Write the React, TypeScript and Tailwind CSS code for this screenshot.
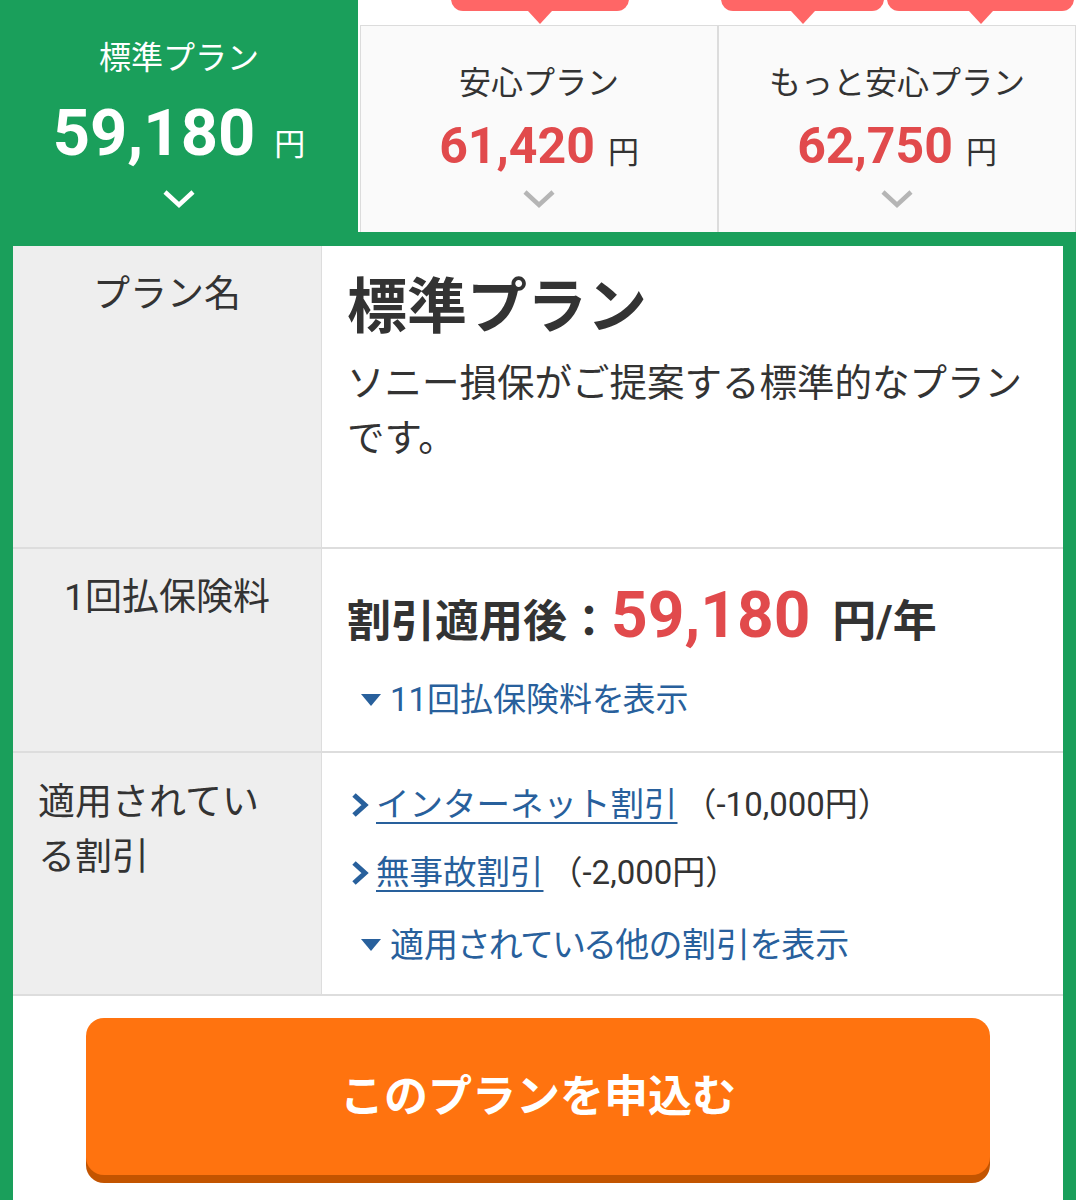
import React from "react";

const ChevronDown = ({ color, className }: { color: string; className?: string }) => (
  <svg width="34" height="20" viewBox="0 0 34 20" className={className}>
    <polyline points="3,3 17,16 31,3" fill="none" stroke={color} strokeWidth="4.5" strokeLinecap="butt" />
  </svg>
);

const ChevronRight = () => (
  <svg width="20" height="28" viewBox="0 0 20 28" className="shrink-0">
    <polyline points="4,4 15,14 4,24" fill="none" stroke="#28609c" strokeWidth="5" />
  </svg>
);

const Triangle = () => (
  <svg width="22" height="14" viewBox="0 0 22 14" className="shrink-0">
    <polygon points="1,1 21,1 11,13" fill="#28609c" />
  </svg>
);

const Bubble = ({ className }: { className: string }) => (
  <div className={`absolute flex flex-col items-center ${className}`}>
    <div className="h-[40px] w-full rounded-b-[12px] bg-[#ff6666]" />
    <div className="h-0 w-0 border-x-[12px] border-t-[13px] border-x-transparent border-t-[#ff6666]" />
  </div>
);

const plans = [
  { name: "安心プラン", price: "61,420" },
  { name: "もっと安心プラン", price: "62,750" },
];

export default function App() {
  return (
    <div className="min-h-[1220px] overflow-hidden bg-white font-['Roboto','Noto_Sans_CJK_JP',sans-serif] text-[#333]">
      {/* Tabs */}
      <div className="flex h-[232px]">
        <div className="flex w-[358px] shrink-0 flex-col items-center bg-[#1a9f5b] pt-[36px] text-white">
          <div className="text-[32px] leading-[44px]">標準プラン</div>
          <div className="mt-[21px] flex items-baseline">
            <span className="text-[65px] font-bold leading-none">59,180</span>
            <span className="ml-[19px] text-[31px] leading-none">円</span>
          </div>
          <ChevronDown color="#ffffff" className="mt-auto mb-[23px]" />
        </div>

        {plans.map((p, i) => (
          <div
            key={p.name}
            className={`relative mt-[25px] flex flex-col items-center border border-b-0 border-[#dcdcdc] bg-[#fafafa] pt-[35px] ${
              i === 0 ? "ml-[2px] w-[358px] shrink-0" : "flex-1"
            }`}
          >
            {i === 0 ? (
              <Bubble className="-top-[55px] left-[90px] w-[178px]" />
            ) : (
              <>
                <Bubble className="-top-[55px] left-[2px] w-[163px]" />
                <Bubble className="-top-[55px] left-[168px] w-[187px]" />
              </>
            )}
            <div className="text-[32px] leading-[44px]">{p.name}</div>
            <div className="mt-[16px] flex items-baseline">
              <span className="text-[50px] font-bold leading-none text-[#e14a4c]">{p.price}</span>
              <span className="ml-[13px] text-[31px] leading-none">円</span>
            </div>
            <ChevronDown color="#b5b5b5" className="mt-auto mb-[23px]" />
          </div>
        ))}
      </div>

      {/* Plan detail */}
      <div className="border-x-[13px] border-t-[14px] border-b-0 border-[#1a9f5b]">
        {/* Row: plan name */}
        <div className="grid h-[303px] grid-cols-[309px_1fr] border-b-2 border-[#dddddd]">
          <div className="border-r border-[#dddddd] bg-[#eeeeee] pt-[22px] text-center text-[37px] leading-[54px]">
            プラン名
          </div>
          <div className="px-[25px] pt-[22px]">
            <div className="text-[60px] font-bold leading-[80px]">標準プラン</div>
            <p className="mt-[8px] text-[37.5px] leading-[55px]">ソニー損保がご提案する標準的なプランです。</p>
          </div>
        </div>

        {/* Row: premium */}
        <div className="grid h-[204px] grid-cols-[309px_1fr] border-b-2 border-[#dddddd]">
          <div className="border-r border-[#dddddd] bg-[#eeeeee] pt-[22px] text-center text-[37px] leading-[54px]">
            1回払保険料
          </div>
          <div className="px-[25px] pt-[35px]">
            <div className="flex items-baseline">
              <span className="text-[44px] font-bold leading-none">割引適用後：</span>
              <span className="text-[64px] font-bold leading-none text-[#e14a4c]">59,180</span>
              <span className="ml-[22px] text-[44px] font-bold leading-none">円/年</span>
            </div>
            <div className="mt-[27px] flex items-center gap-[8px] pl-[13px] text-[33px] leading-[50px] text-[#28609c] [font-feature-settings:'palt']">
              <Triangle />
              <span>11回払保険料を表示</span>
            </div>
          </div>
        </div>

        {/* Row: discounts */}
        <div className="grid h-[243px] grid-cols-[309px_1fr] border-b-2 border-[#dddddd]">
          <div className="border-r border-[#dddddd] bg-[#eeeeee] pl-[25px] pr-[45px] pt-[22px] text-[37px] leading-[55px]">
            適用されている割引
          </div>
          <div className="px-[28px] pt-[27px] text-[33.5px] leading-[50px]">
            <div className="flex items-center gap-[6px]">
              <ChevronRight />
              <span className="text-[#28609c] underline decoration-2 underline-offset-[6px]">インターネット割引</span>
              <span className="text-[33px]">（-10,000円）</span>
            </div>
            <div className="mt-[18px] flex items-center gap-[6px]">
              <ChevronRight />
              <span className="text-[#28609c] underline decoration-2 underline-offset-[6px]">無事故割引</span>
              <span className="text-[33px]">（-2,000円）</span>
            </div>
            <div className="mt-[22px] flex items-center gap-[8px] pl-[10px] text-[34px] text-[#28609c] [font-feature-settings:'palt']">
              <Triangle />
              <span>適用されている他の割引を表示</span>
            </div>
          </div>
        </div>

        {/* Apply button */}
        <div className="px-[73px] pb-[60px] pt-[22px]">
          <button className="flex h-[157px] w-full items-center justify-center rounded-[18px] bg-[#ff730f] text-[44px] font-bold text-white shadow-[0_8px_0_#c35400]">
            このプランを申込む
          </button>
        </div>
      </div>
    </div>
  );
}
